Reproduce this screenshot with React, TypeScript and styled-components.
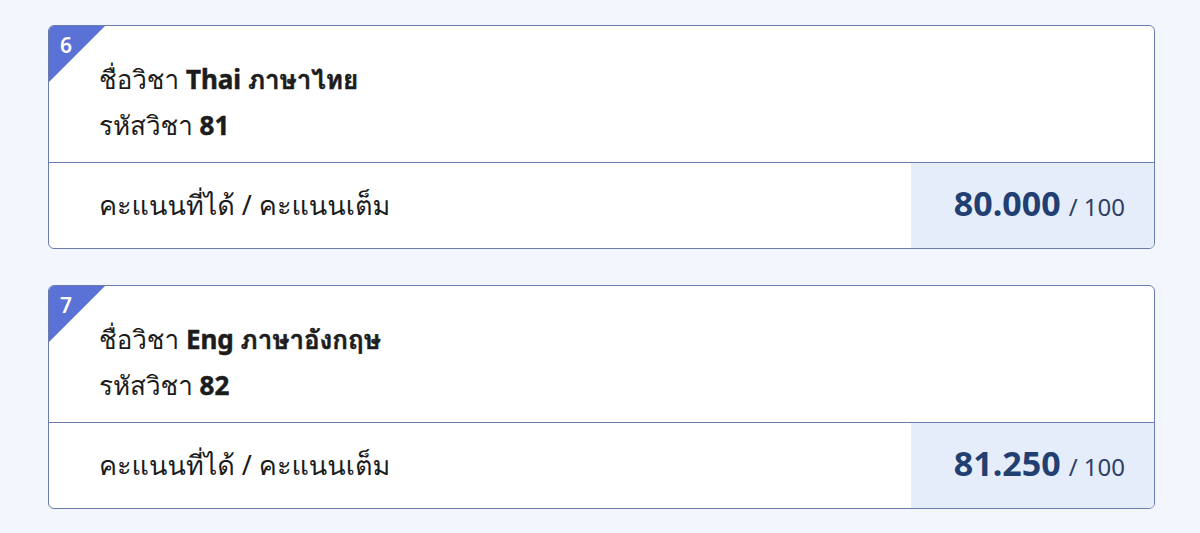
import React from 'react';
import styled, { createGlobalStyle } from 'styled-components';

interface Subject {
  order: number;
  name: string;
  code: string;
  score: string;
  full: number;
}

const subjects: Subject[] = [
  { order: 6, name: 'Thai ภาษาไทย', code: '81', score: '80.000', full: 100 },
  { order: 7, name: 'Eng ภาษาอังกฤษ', code: '82', score: '81.250', full: 100 },
];

const GlobalStyle = createGlobalStyle`
  body {
    margin: 0;
    background: #f3f6fc;
    font-family: 'Noto Sans', 'Loma', 'Noto Sans Thai', sans-serif;
    color: #1c1c1c;
  }
`;

const SubjectCard = ({ subject }: { subject: Subject }) => (
  <StyledCard>
    <StyledBadge>
      <span>{subject.order}</span>
    </StyledBadge>
    <StyledCardHeader>
      <StyledLine>
        ชื่อวิชา <b>{subject.name}</b>
      </StyledLine>
      <StyledLine>
        รหัสวิชา <b>{subject.code}</b>
      </StyledLine>
    </StyledCardHeader>
    <StyledScoreRow>
      <StyledScoreLabel>คะแนนที่ได้ / คะแนนเต็ม</StyledScoreLabel>
      <StyledScoreCell>
        <StyledScore>{subject.score}</StyledScore>
        <StyledFull>/ {subject.full}</StyledFull>
      </StyledScoreCell>
    </StyledScoreRow>
  </StyledCard>
);

const App = () => (
  <>
    <GlobalStyle />
    <StyledPage>
      {subjects.map((s) => (
        <SubjectCard key={s.order} subject={s} />
      ))}
    </StyledPage>
  </>
);

const StyledPage = styled.div`
  display: flex;
  flex-direction: column;
  gap: 36px;
  padding: 25px 45px 0 48px;
`;
const StyledCard = styled.div`
  position: relative;
  background: #ffffff;
  border: 1.5px solid #6a7cab;
  border-radius: 6px;
  overflow: hidden;
`;
const StyledBadge = styled.div`
  position: absolute;
  top: 0;
  left: 0;
  width: 56px;
  height: 56px;
  background: #5a72d6;
  clip-path: polygon(0 0, 100% 0, 0 100%);
  span {
    position: absolute;
    top: 5px;
    left: 11px;
    color: #ffffff;
    font-family: 'Noto Sans', sans-serif;
    font-size: 21px;
    font-weight: 600;
    line-height: 28px;
  }
`;
const StyledCardHeader = styled.div`
  padding: 30px 50px 14px;
  border-bottom: 1.5px solid #6a7cab;
`;
const StyledLine = styled.div`
  font-size: 26px;
  line-height: 46px;
  font-weight: 500;
  b {
    font-weight: 700;
    -webkit-text-stroke: 0.5px currentColor;
  }
`;
const StyledScoreRow = styled.div`
  display: flex;
  height: 85px;
`;
const StyledScoreLabel = styled.div`
  flex: 1 1 auto;
  display: flex;
  align-items: center;
  padding-left: 50px;
  font-size: 27px;
`;
const StyledScoreCell = styled.div`
  flex: 0 0 243px;
  display: flex;
  align-items: baseline;
  justify-content: flex-end;
  gap: 8px;
  padding: 17px 29px 0 0;
  background: #e5edfb;
  box-sizing: border-box;
`;
const StyledScore = styled.span`
  font-family: 'Noto Sans', sans-serif;
  font-size: 34px;
  font-weight: 700;
  color: #223f72;
`;
const StyledFull = styled.span`
  font-family: 'Noto Sans', sans-serif;
  font-size: 24px;
  color: #2d4066;
`;

export default App;
